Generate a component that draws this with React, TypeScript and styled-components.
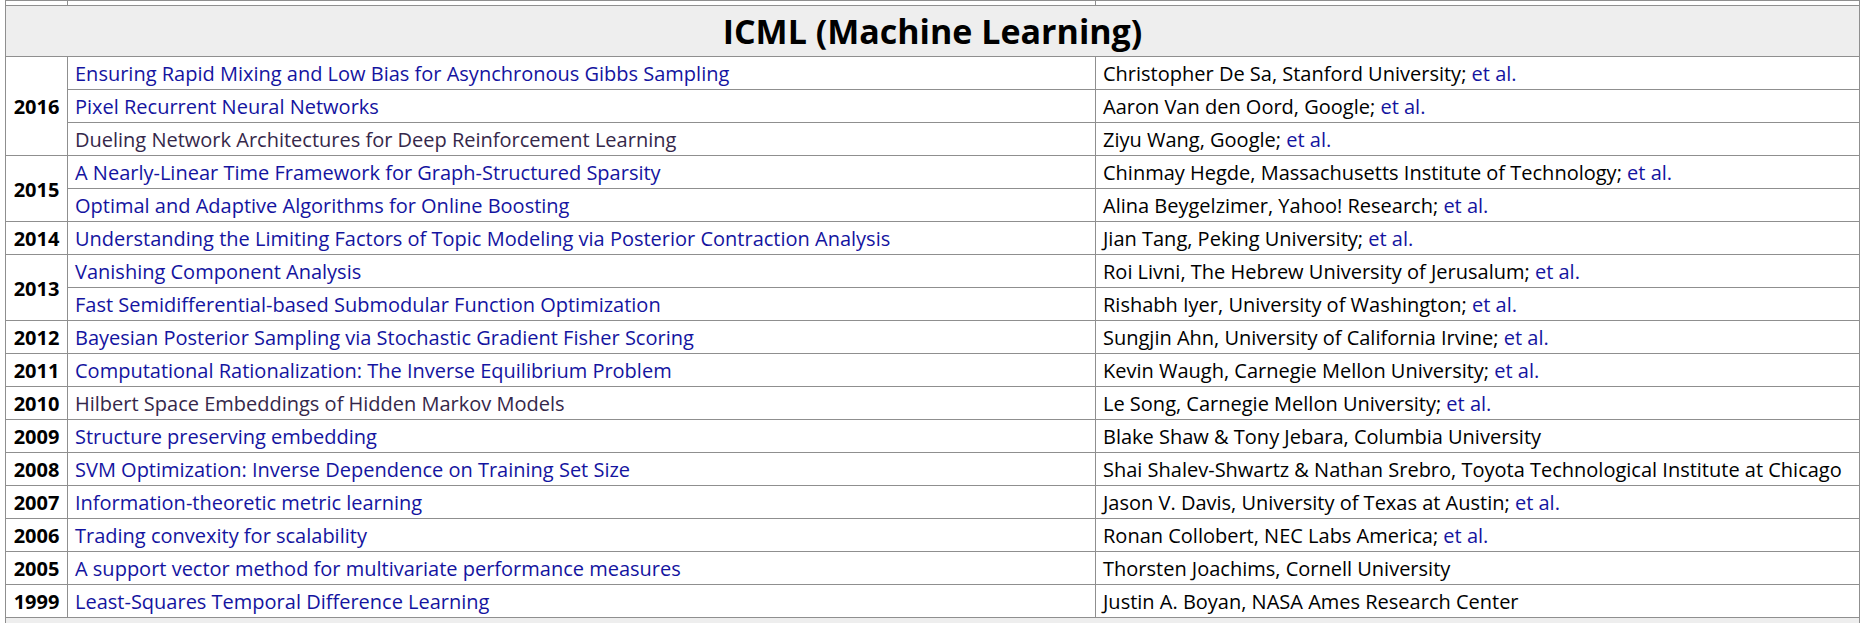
import React from "react";
import styled, { createGlobalStyle } from "styled-components";

const GlobalStyle = createGlobalStyle`
  html, body { margin: 0; padding: 0; background: #ffffff; }
  body { font-family: "Open Sans", "Noto Sans", sans-serif; overflow: hidden; }
`;

const Page = styled.div`
  padding-left: 5px;
  width: 1862px;
  height: 623px;
  overflow: hidden;
  box-sizing: border-box;
`;

const Table = styled.table`
  border-collapse: collapse;
  table-layout: fixed;
  width: 1854px;
  font-size: 20px;
  color: #000;
`;

const Cell = styled.td`
  border: 1px solid #8f8f8f;
  padding: 1px 7px 0;
  height: 32px;
  box-sizing: border-box;
  white-space: nowrap;
  overflow: hidden;
  vertical-align: middle;
  line-height: 31px;
`;

const YearCell = styled(Cell)`
  font-weight: 700;
  text-align: center;
  padding: 1px 2px 0;
`;

const StubCell = styled(Cell)`
  height: 5px;
  line-height: 5px;
  padding: 0;
`;

const HeaderCell = styled.th`
  border: 1px solid #8f8f8f;
  background: #eeeeee;
  height: 50px;
  font-size: 34px;
  font-weight: 700;
  line-height: 50px;
  text-align: center;
  padding: 0;
  color: #000;
`;

const NextHeader = styled.td`
  border: 1px solid #8f8f8f;
  background: #eeeeee;
  height: 30px;
`;

const PaperLink = styled.a<{ $visited?: boolean }>`
  color: ${(p) => (p.$visited ? "#35284a" : "#1414a0")};
  text-decoration: none;
`;

const EtAl = styled.a`
  color: #1414a0;
  text-decoration: none;
`;

type Paper = { title: string; author: string; etal?: boolean; visited?: boolean };
type Group = { year: string; papers: Paper[] };

const groups: Group[] = [
  {
    year: "2016",
    papers: [
      { title: "Ensuring Rapid Mixing and Low Bias for Asynchronous Gibbs Sampling", author: "Christopher De Sa, Stanford University", etal: true },
      { title: "Pixel Recurrent Neural Networks", author: "Aaron Van den Oord, Google", etal: true },
      { title: "Dueling Network Architectures for Deep Reinforcement Learning", author: "Ziyu Wang, Google", etal: true, visited: true },
    ],
  },
  {
    year: "2015",
    papers: [
      { title: "A Nearly-Linear Time Framework for Graph-Structured Sparsity", author: "Chinmay Hegde, Massachusetts Institute of Technology", etal: true },
      { title: "Optimal and Adaptive Algorithms for Online Boosting", author: "Alina Beygelzimer, Yahoo! Research", etal: true },
    ],
  },
  {
    year: "2014",
    papers: [
      { title: "Understanding the Limiting Factors of Topic Modeling via Posterior Contraction Analysis", author: "Jian Tang, Peking University", etal: true },
    ],
  },
  {
    year: "2013",
    papers: [
      { title: "Vanishing Component Analysis", author: "Roi Livni, The Hebrew University of Jerusalum", etal: true },
      { title: "Fast Semidifferential-based Submodular Function Optimization", author: "Rishabh Iyer, University of Washington", etal: true },
    ],
  },
  { year: "2012", papers: [{ title: "Bayesian Posterior Sampling via Stochastic Gradient Fisher Scoring", author: "Sungjin Ahn, University of California Irvine", etal: true }] },
  { year: "2011", papers: [{ title: "Computational Rationalization: The Inverse Equilibrium Problem", author: "Kevin Waugh, Carnegie Mellon University", etal: true }] },
  { year: "2010", papers: [{ title: "Hilbert Space Embeddings of Hidden Markov Models", author: "Le Song, Carnegie Mellon University", etal: true, visited: true }] },
  { year: "2009", papers: [{ title: "Structure preserving embedding", author: "Blake Shaw & Tony Jebara, Columbia University" }] },
  { year: "2008", papers: [{ title: "SVM Optimization: Inverse Dependence on Training Set Size", author: "Shai Shalev-Shwartz & Nathan Srebro, Toyota Technological Institute at Chicago" }] },
  { year: "2007", papers: [{ title: "Information-theoretic metric learning", author: "Jason V. Davis, University of Texas at Austin", etal: true }] },
  { year: "2006", papers: [{ title: "Trading convexity for scalability", author: "Ronan Collobert, NEC Labs America", etal: true }] },
  { year: "2005", papers: [{ title: "A support vector method for multivariate performance measures", author: "Thorsten Joachims, Cornell University" }] },
  { year: "1999", papers: [{ title: "Least-Squares Temporal Difference Learning", author: "Justin A. Boyan, NASA Ames Research Center" }] },
];

export default function App() {
  return (
    <>
      <GlobalStyle />
      <Page>
        <Table>
          <colgroup>
            <col style={{ width: 62 }} />
            <col style={{ width: 1028 }} />
            <col style={{ width: 764 }} />
          </colgroup>
          <tbody>
            <tr>
              <StubCell />
              <StubCell />
              <StubCell />
            </tr>
            <tr>
              <HeaderCell colSpan={3}>ICML (Machine Learning)</HeaderCell>
            </tr>
            {groups.map((g) =>
              g.papers.map((p, i) => (
                <tr key={g.year + i}>
                  {i === 0 && <YearCell rowSpan={g.papers.length}>{g.year}</YearCell>}
                  <Cell>
                    <PaperLink href="#" $visited={p.visited}>{p.title}</PaperLink>
                  </Cell>
                  <Cell>
                    {p.author}
                    {p.etal && (
                      <>
                        ; <EtAl href="#">et al.</EtAl>
                      </>
                    )}
                  </Cell>
                </tr>
              ))
            )}
            <tr>
              <NextHeader colSpan={3} />
            </tr>
          </tbody>
        </Table>
      </Page>
    </>
  );
}
